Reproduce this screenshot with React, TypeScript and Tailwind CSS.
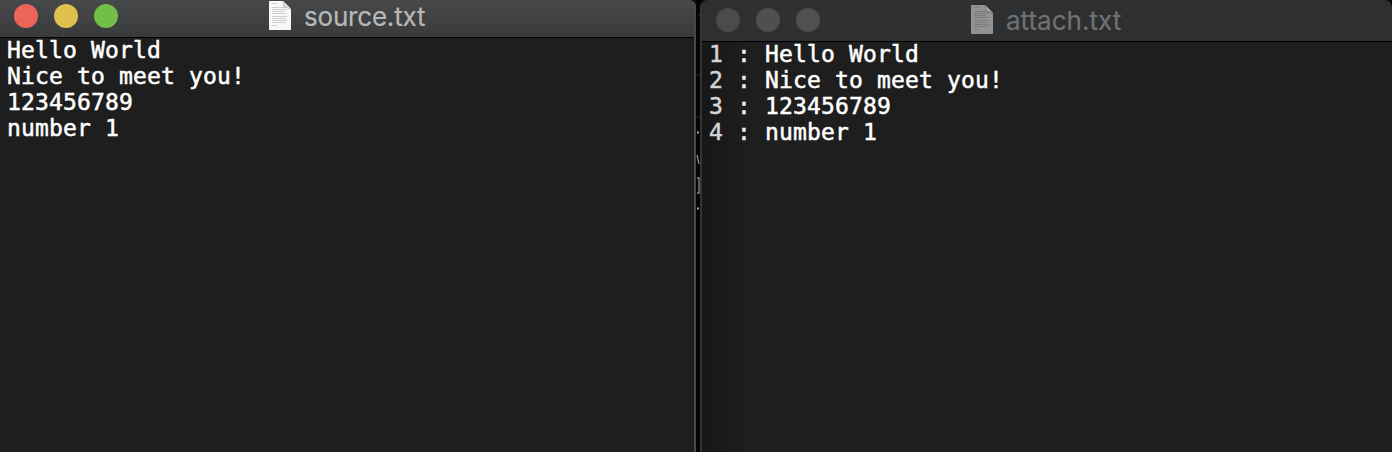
import React from "react";

const lines = ["Hello World", "Nice to meet you!", "123456789", "number 1"];

function DocumentIcon({ dim }: { dim?: boolean }) {
  const rows = [4, 8, 10, 12, 14, 17, 19, 21, 23, 26];
  const widths = [5, 13, 15, 12, 14, 15, 13, 15, 14, 5];
  return (
    <svg width="24" height="31" viewBox="0 0 24 31" className="block shrink-0">
      <path d="M1 1H15L23 9V30H1Z" fill={dim ? "#929292" : "#f8f8f8"} />
      {rows.map((y, i) => (
        <path key={y} d={`M4 ${y - 0.5}h${widths[i]}`} stroke={dim ? "#7d7d7d" : "#cecece"} strokeWidth="1" />
      ))}
      <path d="M15 1L16 7L23 9Z" fill={dim ? "#a9a9a9" : "#dedede"} />
      <path d="M15 1L16 7L23 9" fill="none" stroke={dim ? "#666" : "#aaa"} strokeWidth=".7" />
    </svg>
  );
}

function Dots({ colors }: { colors: string[] }) {
  return (
    <div className="flex gap-4">
      {colors.map((c, i) => (
        <span key={i} className={`size-6 rounded-full ${c}`} />
      ))}
    </div>
  );
}

export default function App() {
  return (
    <div className="flex h-[452px] w-[1392px] overflow-hidden bg-[#080808] font-['DejaVu_Sans_Mono',monospace]">
      <section className="flex w-[696px] shrink-0 flex-col overflow-hidden rounded-tr-[6px] border-r-2 border-[#484848] bg-[#1e1e1e]">
        <header className="flex h-[38px] shrink-0 border-b border-black bg-linear-to-b from-[#464849] to-[#393a3b] pl-[14px] pt-1">
          <Dots colors={["bg-[#ed655a]", "bg-[#e0c04c]", "bg-[#72be47]"]} />
          <div className="-mt-1 ml-[150px] flex">
            <DocumentIcon />
            <span className="ml-[12px] mt-px font-['Inter',sans-serif] text-[26px] leading-[32px] tracking-[-0.2px] text-[#b7b8b9] [-webkit-text-stroke:0.2px_#b7b8b9]">source.txt</span>
          </div>
        </header>
        <div className="-mt-px whitespace-pre pl-[7px] text-[23px] leading-[26px] tracking-[0.153px] text-white [-webkit-text-stroke:0.5px_currentColor]">
          {lines.map((line) => <div key={line}>{line}</div>)}
        </div>
      </section>

      <div className="h-full w-1 shrink-0 overflow-hidden bg-[#050505]">
        <svg width="4" height="452" viewBox="0 0 4 452" className="block">
          <path d="M2 15h2M1 75h3M1 117h3" stroke="#303030" />
          <path d="M1 132.5h2M1 208.5h2" stroke="#aaa" strokeWidth="2" />
          <path d="M1 155L3 164M1 178h2v15h-2" fill="none" stroke="#8c8c8c" strokeWidth="1.3" />
        </svg>
      </div>

      <section className="flex min-w-0 flex-1 flex-col overflow-hidden rounded-t-[8px] border-l-2 border-[#353535] bg-[#1e1e1e] bg-linear-to-r from-[#171717] from-0% to-[#1e1e1e] to-[50px]">
        <header className="flex h-[42px] shrink-0 border-b border-black bg-[#2d2f30] pl-[14px] pt-2">
          <Dots colors={["bg-[#4b4b4b]", "bg-[#4f4f4f]", "bg-[#505050]"]} />
          <div className="-mt-1 ml-[150px] flex">
            <DocumentIcon dim />
            <span className="ml-[12px] mt-px font-['Inter',sans-serif] text-[26px] leading-[32px] text-[#707172] [-webkit-text-stroke:0.2px_#707172]">attach.txt</span>
          </div>
        </header>
        <div className="-mt-px whitespace-pre pl-[7px] text-[23px] leading-[26px] tracking-[0.153px] text-white [-webkit-text-stroke:0.5px_currentColor]">
          {lines.map((line, i) => (
            <div key={line}>
              <span className="text-[#d4d4d4] [-webkit-text-stroke:0.5px_#d4d4d4]">{i + 1}</span>
              <span className="text-[#ededed]"> : </span>
              {line}
            </div>
          ))}
        </div>
      </section>
    </div>
  );
}
